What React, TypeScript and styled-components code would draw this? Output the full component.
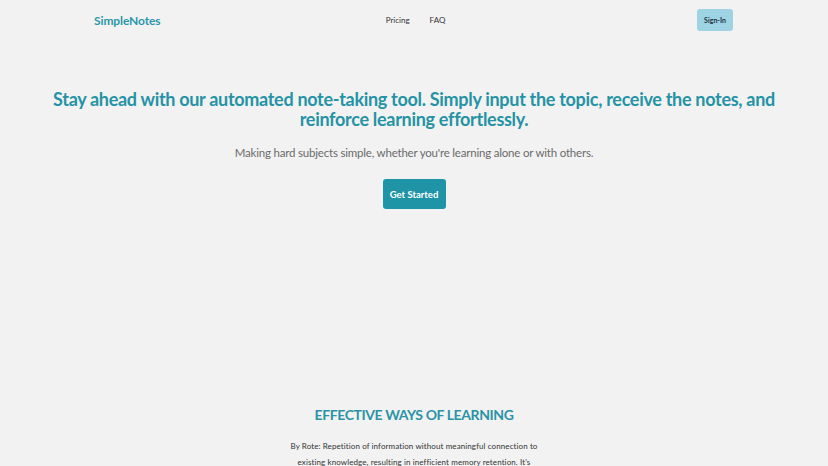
import React from 'react';
import styled, { createGlobalStyle } from 'styled-components';

const GlobalStyle = createGlobalStyle`
  html, body {
    margin: 0;
    padding: 0;
    background: #f2f2f2;
    font-family: Lato, "Liberation Sans", sans-serif;
  }
  * { box-sizing: border-box; }
`;

const Page = styled.div`
  width: 828px;
  min-height: 466px;
  overflow: hidden;
  background: #f2f2f2;
`;

const Header = styled.header`
  display: grid;
  grid-template-columns: 1fr auto 1fr;
  align-items: center;
  height: 40px;
  padding: 0 95px 0 94px;
`;

const Logo = styled.div`
  font-size: 12px;
  font-weight: 700;
  color: #2a97a8;
  letter-spacing: -0.1px;
`;

const Nav = styled.nav`
  display: flex;
  gap: 20px;
  margin-left: 4px;
  font-size: 8px;
  color: #333;
`;

const NavLink = styled.a`
  color: inherit;
  text-decoration: none;
`;

const SignIn = styled.button`
  justify-self: end;
  width: 36px;
  height: 22px;
  border: none;
  border-radius: 3px;
  background: #9dd3e2;
  color: #1d3442;
  font-family: inherit;
  font-size: 7px;
  font-weight: 700;
  padding: 0;
`;

const Hero = styled.section`
  display: flex;
  flex-direction: column;
  align-items: center;
  padding-top: 49px;
  height: 366px;
  text-align: center;
`;

const Headline = styled.h1`
  margin: 0;
  max-width: 760px;
  font-size: 18px;
  line-height: 20px;
  font-weight: 700;
  letter-spacing: -0.3px;
  color: #2592a5;
`;

const Subtitle = styled.p`
  margin: 17px 0 0;
  font-size: 11.5px;
  letter-spacing: -0.2px;
  color: #6b6b6b;
`;

const CtaButton = styled.button`
  margin-top: 20px;
  width: 63px;
  height: 30px;
  border: none;
  border-radius: 3px;
  background: #2094a7;
  color: #fff;
  font-family: inherit;
  font-size: 9.5px;
  font-weight: 700;
  padding: 0;
`;

const Section = styled.section`
  display: flex;
  flex-direction: column;
  align-items: center;
  text-align: center;
`;

const SectionTitle = styled.h2`
  margin: 0;
  font-size: 14px;
  font-weight: 700;
  letter-spacing: -0.4px;
  color: #2a93a6;
`;

const Paragraph = styled.p`
  margin: 15px 0 0;
  width: 266px;
  font-size: 8px;
  line-height: 16px;
  letter-spacing: 0.1px;
  color: #333;
`;

export default function App() {
  return (
    <Page>
      <GlobalStyle />
      <Header>
        <Logo>SimpleNotes</Logo>
        <Nav>
          <NavLink href="#">Pricing</NavLink>
          <NavLink href="#">FAQ</NavLink>
        </Nav>
        <SignIn>Sign-In</SignIn>
      </Header>
      <Hero>
        <Headline>
          Stay ahead with our automated note-taking tool. Simply input the topic, receive the notes, and
          reinforce learning effortlessly.
        </Headline>
        <Subtitle>Making hard subjects simple, whether you're learning alone or with others.</Subtitle>
        <CtaButton>Get Started</CtaButton>
      </Hero>
      <Section>
        <SectionTitle>EFFECTIVE WAYS OF LEARNING</SectionTitle>
        <Paragraph>
          By Rote: Repetition of information without meaningful connection to existing knowledge,
          resulting in inefficient memory retention. It's
        </Paragraph>
      </Section>
    </Page>
  );
}
